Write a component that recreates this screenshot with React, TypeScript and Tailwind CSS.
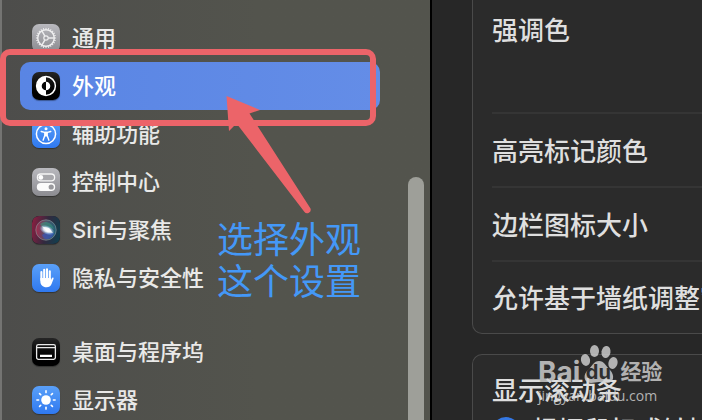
import type { ReactNode } from "react";

type Item = { label: string; icon: ReactNode; selected?: boolean };

const tile = "size-7 shrink-0 rounded-[7px] shadow-[0_1px_1px_rgba(0,0,0,0.35)]";
const silver = `${tile} bg-linear-to-b from-[#b9b9be] to-[#8c8c91]`;
const blue = `${tile} bg-linear-to-b from-[#5aa0f8] to-[#2f78f0]`;
const black = `${tile} bg-linear-to-b from-[#262626] to-black`;

function GearIcon() {
  const teeth = Array.from({ length: 24 }, (_, i) => i * 15);
  return (
    <svg viewBox="0 0 28 28" className={silver} fill="none" stroke="#ededee" aria-hidden="true">
      <circle cx="14" cy="14" r="8.3" strokeWidth="1.5" />
      {teeth.map((a) => (
        <path key={a} d="M14 5.6V3.9" strokeWidth="1" transform={`rotate(${a} 14 14)`} />
      ))}
      <circle cx="14" cy="14" r="2.2" strokeWidth="1.2" />
      <path d="M16.2 14H22M12.9 12.1L10 7M12.9 15.9L10 21" strokeWidth="1.5" />
    </svg>
  );
}

function AppearanceIcon() {
  return (
    <svg viewBox="0 0 28 28" className={black} aria-hidden="true">
      <circle cx="14" cy="14" r="9.4" fill="none" stroke="#fff" strokeWidth="1.5" />
      <path d="M14 4.6a9.4 9.4 0 0 0 0 18.8z" fill="#fff" />
      <path d="M14 9.7a4.3 4.3 0 0 0 0 8.6z" fill="#050505" />
      <path d="M14 9.7a4.3 4.3 0 0 1 0 8.6z" fill="#fff" />
    </svg>
  );
}

function AccessibilityIcon() {
  return (
    <svg viewBox="0 0 28 28" className={blue} fill="none" stroke="#fff" strokeLinecap="round" strokeLinejoin="round" aria-hidden="true">
      <circle cx="14" cy="14" r="9.6" strokeWidth="1.5" />
      <circle cx="14" cy="8.7" r="1.5" fill="#fff" stroke="none" />
      <path d="M9.2 11.5l3.4.9h2.8l3.4-.9" strokeWidth="1.4" />
      <path d="M12.8 12.4h2.4v3.2l1.7 4.6M12.8 12.4v3.2l-1.700 4.600M14 12.500v3.500" strokeWidth="1.4" />
    </svg>
  );
}

function ControlIcon() {
  return (
    <svg viewBox="0 0 28 28" className={silver} aria-hidden="true">
      <rect x="5.4" y="6" width="17.2" height="6.8" rx="3.4" fill="#a8a8ac" stroke="#f6f6f6" strokeWidth="1.3" />
      <circle cx="8.8" cy="9.4" r="2.4" fill="#fff" />
      <rect x="4.8" y="15" width="18.4" height="8" rx="4" fill="#fbfbfb" />
      <circle cx="19.2" cy="19" r="2.6" fill="#99999d" />
    </svg>
  );
}

function SiriIcon() {
  return (
    <svg viewBox="0 0 28 28" className={`${tile} bg-[#211b2a]`} aria-hidden="true">
      <defs>
        <linearGradient id="siriBack" x1="0" y1="0.4" x2="1" y2="0.6">
          <stop offset="0" stopColor="#831f40" />
          <stop offset="0.5" stopColor="#33293e" />
          <stop offset="1" stopColor="#123e4e" />
        </linearGradient>
        <linearGradient id="siriOrb" x1="0" y1="0.5" x2="1" y2="0.5">
          <stop offset="0" stopColor="#d22e57" />
          <stop offset="0.5" stopColor="#68798c" />
          <stop offset="1" stopColor="#238099" />
        </linearGradient>
        <radialGradient id="siriGlow">
          <stop offset="0" stopColor="#fff" />
          <stop offset="0.45" stopColor="#e6eefb" stopOpacity="0.9" />
          <stop offset="1" stopColor="#8cc8ff" stopOpacity="0" />
        </radialGradient>
      </defs>
      <rect width="28" height="28" rx="7" fill="url(#siriBack)" />
      <circle cx="14" cy="14" r="10.2" fill="url(#siriOrb)" fillOpacity="0.55" stroke="#8f9aa0" strokeOpacity="0.75" strokeWidth="0.8" />
      <path d="M8 8c4-4 12-2 14 5-5-2-8-1-10 1z" fill="#31a184" opacity="0.5" />
      <path d="M10 19c3-3 7-3 12-2-1 4-4 6-8 6-2 0-3-2-4-4z" fill="#3853c4" opacity="0.6" />
      <ellipse cx="15" cy="14" rx="8" ry="4.5" fill="url(#siriGlow)" transform="rotate(22 15 14)" />
      <path d="M10 10.500l7 1.500 4 5-6-1z" fill="#fff" opacity="0.75" />
    </svg>
  );
}

function HandIcon() {
  return (
    <svg viewBox="0 0 28 28" className={blue} fill="none" stroke="#fff" strokeLinecap="round" aria-hidden="true">
      <path d="M9.4 8v8M12.2 5.8V15M15 5.4V15M17.8 7.2V16" strokeWidth="2.1" />
      <path d="M8.35 14h10.5v2.2l1-2c.5-1.2 2.1-.7 1.7.6l-2 5.2c-1 2.4-2.5 3.3-5 3.3-3.9 0-6.2-2.4-6.2-6.3z" fill="#fff" stroke="none" />
    </svg>
  );
}

function DockIcon() {
  return (
    <svg viewBox="0 0 28 28" className={black} fill="none" stroke="#e9e9e9" aria-hidden="true">
      <rect x="4.6" y="6.6" width="18.8" height="14.8" rx="1.8" strokeWidth="1.3" />
      <path d="M5 9.6h18" strokeWidth="1.2" />
      <path d="M8 17.8h12" stroke="#fff" strokeWidth="2.2" />
    </svg>
  );
}

function DisplayIcon() {
  return (
    <svg viewBox="0 0 28 28" className={blue} fill="none" stroke="#fff" strokeWidth="1.6" strokeLinecap="round" aria-hidden="true">
      <circle cx="14" cy="14" r="4.8" fill="#fff" stroke="none" />
      {[0, 45, 90, 135, 180, 225, 270, 315].map((a) => (
        <path key={a} d="M14 6.6V4.9" transform={`rotate(${a} 14 14)`} />
      ))}
    </svg>
  );
}

const groups: Item[][] = [
  [
    { label: "通用", icon: <GearIcon /> },
    { label: "外观", icon: <AppearanceIcon />, selected: true },
    { label: "辅助功能", icon: <AccessibilityIcon /> },
    { label: "控制中心", icon: <ControlIcon /> },
    { label: "Siri与聚焦", icon: <SiriIcon /> },
    { label: "隐私与安全性", icon: <HandIcon /> },
  ],
  [
    { label: "桌面与程序坞", icon: <DockIcon /> },
    { label: "显示器", icon: <DisplayIcon /> },
  ],
];

function Sidebar() {
  return (
    <aside className="flex w-[432px] shrink-0 border-r-2 border-l-2 border-r-black border-l-[#747472] bg-linear-to-r from-[#4d4d4b] to-[#53544d] to-60%">
      <nav className="flex flex-1 flex-col gap-[26px] pt-[14px] pl-[18px]">
        {groups.map((items, g) => (
          <ul key={g}>
            {items.map((item) => (
              <li key={item.label}>
                <button
                  type="button"
                  aria-current={item.selected ? "page" : undefined}
                  className={`flex h-12 w-full items-center gap-3 rounded-[10px] px-3 text-left text-[22px] font-medium ${
                    item.selected ? "bg-linear-to-r from-[#5985e4] to-[#648de7] text-white" : "text-[#e9e9e8]"
                  }`}
                >
                  {item.icon}
                  {item.label}
                </button>
              </li>
            ))}
          </ul>
        ))}
      </nav>
      <div className="flex w-[50px] shrink-0 pt-[177px] pr-[6px] pl-7">
        <div className="flex-1 rounded-t-full bg-[#9e9f99]" />
      </div>
    </aside>
  );
}

function Settings() {
  return (
    <main className="flex min-w-0 flex-1 flex-col gap-5 overflow-hidden bg-[#272727] pl-10 text-[26px] leading-9 font-medium whitespace-nowrap text-[#dfdfdf]">
      <section className="shrink-0 rounded-bl-[10px] border-b border-l border-[#4a4a4a] bg-[#2b2b2b] pl-[19px]">
        <div className="h-[112px] pt-[13px]">强调色</div>
        {["高亮标记颜色", "边栏图标大小", "允许基于墙纸调整窗口色调"].map((label) => (
          <div key={label} className="flex h-[74px] items-center border-t-2 border-[#353535] pt-[3px] last:h-[73px]">
            {label}
          </div>
        ))}
      </section>
      <section className="shrink-0 rounded-tl-[10px] border-t border-l border-[#4a4a4a] bg-[#2b2b2b] pt-[18px] pl-[19px]">
        <h2>显示滚动条</h2>
        <label className="flex items-center gap-3 pt-1">
          <input
            type="radio"
            name="scrollbar"
            defaultChecked
            className="size-7 shrink-0 appearance-none rounded-full border-8 border-[#3478e5] bg-white"
          />
          根据鼠标或触控板自动显示
        </label>
      </section>
    </main>
  );
}

function Annotation() {
  return (
    <>
      <div className="pointer-events-none absolute top-[49px] left-0 h-[77px] w-[376px] rounded-[10px] border-[6px] border-[#ec6469]" />
      <svg
        className="pointer-events-none absolute top-24 left-[226px]"
        width="86"
        height="118"
        viewBox="0 0 86 118"
        fill="#ec6469"
        aria-hidden="true"
      >
        <path d="M.5 0L34 14l-10.500 3.500L84.500 112.500q1 3-2 4.500-2.500 1-4-1L12.500 30 8 30 3 35z" />
      </svg>
      <p className="pointer-events-none absolute top-[219px] left-[217px] text-4xl leading-[42px] text-[#4498f7]">
        选择外观
        <br />
        这个设置
      </p>
    </>
  );
}

function Watermark() {
  return (
    <div className="pointer-events-none absolute top-[344px] left-[538px] text-[#d4d4d4] opacity-80">
      <div className="flex h-[42px] items-end text-[28px] leading-7 font-bold">
        <span>Bai</span>
        <span className="relative flex h-[42px] w-9 items-end justify-center">
          <svg className="absolute bottom-[2px] left-0" width="38" height="42" viewBox="0 0 38 42" fill="currentColor" aria-hidden="true">
            <ellipse cx="5.5" cy="18" rx="4.5" ry="6" transform="rotate(-12 5.5 18)" />
            <ellipse cx="14.5" cy="9" rx="4.5" ry="6" />
            <ellipse cx="26" cy="10" rx="4.5" ry="6" transform="rotate(10 26 10)" />
            <ellipse cx="33" cy="21" rx="4.5" ry="6" transform="rotate(15 33 21)" />
            <path d="M19 19c5 0 7 5 11 9 5 5 4 13-3 13-3 0-5-1-8-1s-5 1-8 1c-8 0-8-9-3-13 4-4 6-9 11-9z" />
          </svg>
          <span className="relative text-xl leading-7 text-[#303030]">du</span>
        </span>
        <span className="pl-1 text-[21px]">经验</span>
      </div>
      <div className="font-['Open_Sans'] text-[14px] leading-5">jingyan.baidu.com</div>
    </div>
  );
}

export default function App() {
  return (
    <div className="relative flex h-screen overflow-hidden bg-[#272727] font-['Inter','Noto_Sans_CJK_SC',sans-serif]" lang="zh-CN">
      <Sidebar />
      <Settings />
      <Annotation />
      <Watermark />
    </div>
  );
}
